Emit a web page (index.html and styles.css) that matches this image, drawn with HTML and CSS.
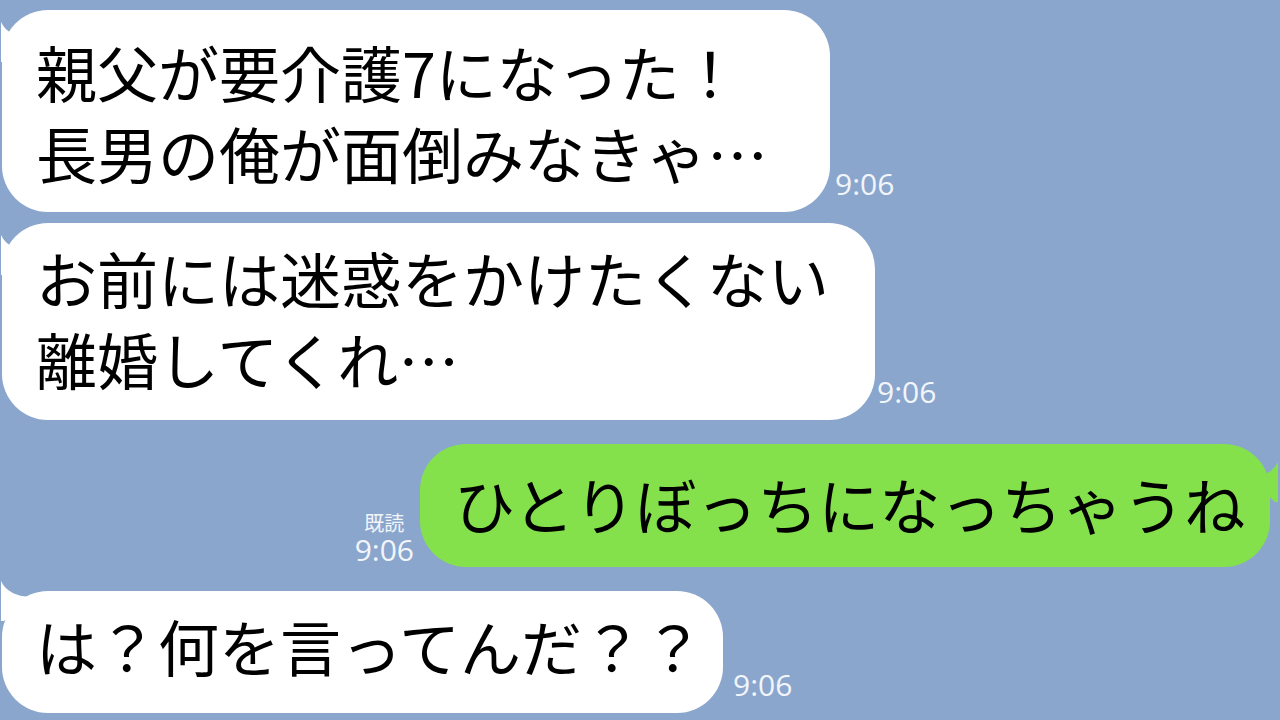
FILE: index.html
```html
<!DOCTYPE html>
<html lang="ja">
<head>
    <meta charset="UTF-8">
    <meta name="viewport" content="width=device-width, initial-scale=1.0">
    <title>トーク</title>
    <link rel="stylesheet" href="styles.css">
</head>
<body>
    <div class="chat">
        <!-- 相手 -->
        <div class="row row-left row-first">
            <div class="bubble bubble-in b1">
                <svg class="tail tail-left" viewBox="0 0 30 40"><path d="M0 0 Q7 15 30 16 L3 40 L0 40 Z"/></svg>
                親父が要介護7になった！<br>長男の俺が面倒みなきゃ…
            </div>
            <div class="time t1">9:06</div>
        </div>

        <div class="row row-left row-tight">
            <div class="bubble bubble-in b2">
                <svg class="tail tail-left" viewBox="0 0 30 40"><path d="M0 0 Q7 15 30 16 L3 40 L0 40 Z"/></svg>
                お前には迷惑をかけたくない<br>離婚してくれ…
            </div>
            <div class="time t2">9:06</div>
        </div>

        <!-- 自分 -->
        <div class="row row-right">
            <div class="meta">
                <div class="read">既読</div>
                <div class="time">9:06</div>
            </div>
            <div class="bubble bubble-out b3">
                <svg class="tail tail-right" viewBox="0 0 30 40"><path d="M30 0 Q23 15 0 16 L27 40 L30 40 Z"/></svg>
                ひとりぼっちになっちゃうね
            </div>
        </div>

        <div class="row row-left">
            <div class="bubble bubble-in b4">
                <svg class="tail tail-left tail-high" viewBox="0 0 30 40"><path d="M0 0 Q7 15 30 16 L3 40 L0 40 Z"/></svg>
                は？何を言ってんだ？？
            </div>
            <div class="time t4">9:06</div>
        </div>
    </div>
</body>
</html>
```

FILE: styles.css
```css
/* Page */
body {
    margin: 0;
    background-color: #8ba6cd;
    font-family: "Noto Sans CJK JP", "Noto Sans", sans-serif;
    overflow: hidden;
}

.chat {
    display: flex;
    flex-direction: column;
    padding: 10px 0 0;
}

/* Message rows */
.row {
    display: flex;
    align-items: flex-end;
    margin-top: 24px;
}

.row-first {
    margin-top: 0;
}

.row-tight {
    margin-top: 11px;
}

.row-left {
    padding-left: 2px;
}

.row-right {
    justify-content: flex-end;
    padding-right: 10px;
}

/* Bubbles */
.bubble {
    position: relative;
    box-sizing: border-box;
    padding-left: 34px;
    border-radius: 46px;
    font-size: 61px;
    line-height: 81px;
    color: #000;
    white-space: nowrap;
}

.bubble-in {
    background-color: #fff;
}

.bubble-out {
    background-color: #84e14c;
}

.b1 {
    width: 828px;
    padding-top: 21px;
    padding-bottom: 19px;
}

.b2 {
    width: 873px;
    padding-top: 14px;
    padding-bottom: 21px;
}

.b3 {
    width: 850px;
    padding-top: 19px;
    padding-bottom: 23px;
}

.b4 {
    width: 721px;
    padding-top: 14px;
    padding-bottom: 27px;
}

/* Tails */
.tail {
    position: absolute;
    width: 30px;
    height: 40px;
}

.tail-left {
    left: -1px;
    top: 12px;
    fill: #fff;
}

.tail-high {
    top: -10px;
}

.tail-right {
    right: -8px;
    top: 18px;
    fill: #84e14c;
}

/* Time stamps */
.time {
    font-family: "Open Sans", "Noto Sans", sans-serif;
    font-size: 30px;
    line-height: 32px;
    color: #f2f5fa;
    margin-left: 5px;
    margin-bottom: 12px;
}

.t2 {
    margin-left: 2px;
}

.t4 {
    margin-left: 10px;
}

.meta {
    display: flex;
    flex-direction: column;
    align-items: center;
    margin-right: 6px;
    margin-bottom: 2px;
}

.meta .time {
    margin: 0;
    line-height: 30px;
}

.read {
    font-size: 20px;
    line-height: 24px;
    color: #f2f5fa;
}
```
